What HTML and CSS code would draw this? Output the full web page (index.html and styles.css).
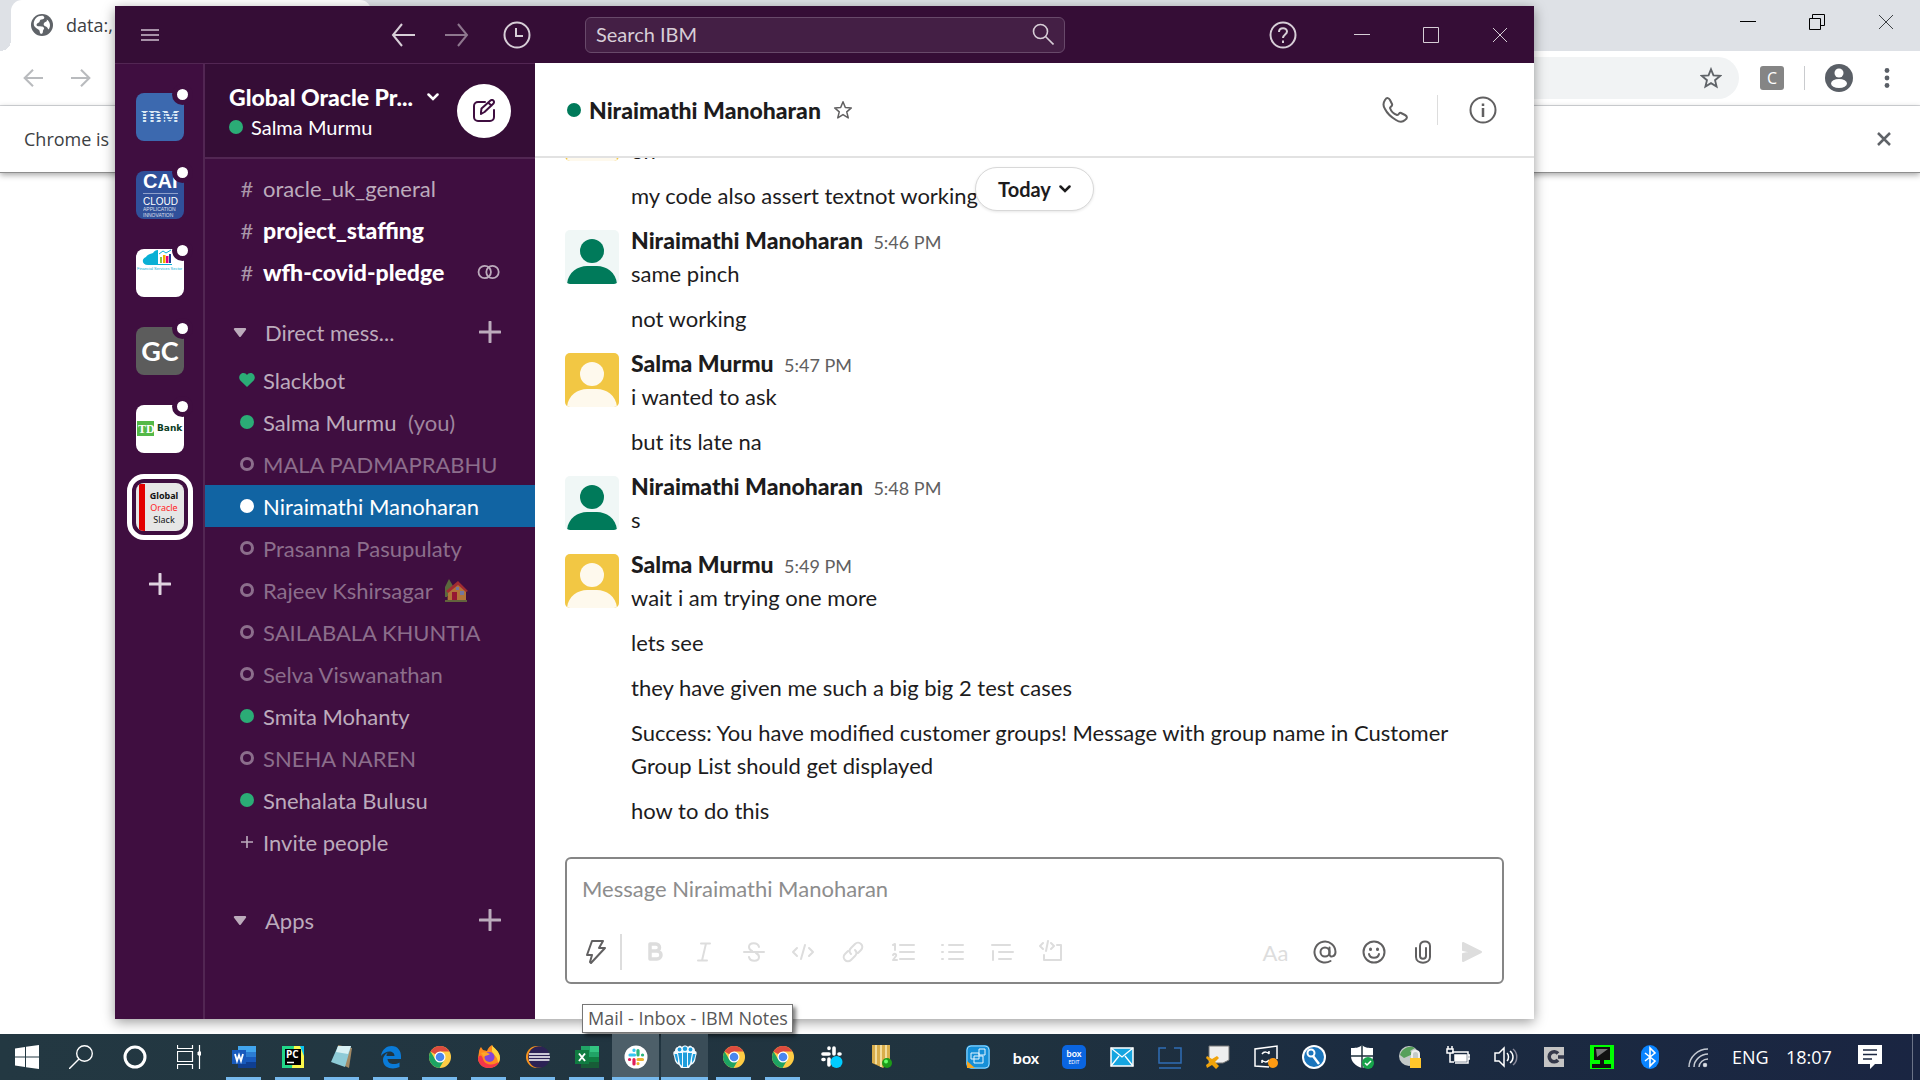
FILE: index.html
```html
<!DOCTYPE html>
<html lang="en">
<head>
<meta charset="utf-8">
<title>Niraimathi Manoharan | Slack</title>
<link rel="stylesheet" href="styles.css">
</head>
<body>
<svg class="defs" aria-hidden="true">
  <symbol id="person" viewBox="0 0 54 54"><ellipse cx="27" cy="21" rx="12" ry="12"/><path d="M2 54C3 42 13 36 22 36h10c9 0 19 6 20 18z"/></symbol>
  <symbol id="chrome" viewBox="0 0 24 24"><circle cx="12" cy="12" r="11" fill="#fc4"/><path d="M12 12 2.5 6.500A11 11 0 0 1 21.500 6.500H12z" fill="#dd4b3e"/><path d="M2.500 6.500A11 11 0 0 0 11.500 23l5-8.500L12 17l-5-3z" fill="#1da362"/><circle cx="12" cy="12" r="5.500" fill="#fff"/><circle cx="12" cy="12" r="4.300" fill="#4a86ee"/></symbol>
  <symbol id="plus" viewBox="0 0 22 22"><path d="M11 1v20M1 11h20" fill="none" stroke="currentColor" stroke-width="3" stroke-linecap="round"/></symbol>
  <symbol id="caret" viewBox="0 0 12 8"><path d="M1.500 1h9L6 7z" fill="currentColor" stroke="currentColor" stroke-width="2" stroke-linejoin="round"/></symbol>
  <symbol id="chev" viewBox="0 0 12 8"><path d="M1.500 1.500 6 6l4.500-4.500" fill="none" stroke="currentColor" stroke-width="2.500" stroke-linecap="round"/></symbol>
  <symbol id="arrow" viewBox="0 0 24 24"><path d="M11 1 2 12l9 11M2 12h22" fill="none" stroke="currentColor" stroke-width="2"/></symbol>
  <symbol id="close" viewBox="0 0 16 16"><path d="m1 1 14 14M15 1 1 15" fill="none" stroke="currentColor"/></symbol>
</svg>

<div class="screen">
  <section class="browser" aria-label="Browser">
    <div class="tabs">
      <div class="tab">
        <svg width="22" height="22" viewBox="0 0 24 24"><circle cx="12" cy="12" r="12" fill="#5f6368"/><path d="M13 2c3 2 1 4-1 4-3 0-2 2-3 3s-3 1-3 3 5 1 7 2c3 2 0 3 0 5 0 3-2 3-3 2-1-2 0-3-2-4-3-2-5-3-5-6 0-6 5-10 10-9zM17 6c4 2 5 8 2 11-1-2-1-3-4-4-2-1-1-3 0-4 2-1 3-1 2-3z" fill="#fff"/></svg>
        <span>data:,</span>
      </div>
      <div class="win-btns">
        <button aria-label="Minimize"><svg width="16" height="16" viewBox="0 0 16 16"><path d="M0 7.500h16" stroke="#000"/></svg></button>
        <button aria-label="Restore"><svg width="16" height="16" viewBox="0 0 16 16" fill="none" stroke="#000"><path d="M.5 4.500h11v11H.5zM3.500 4V.5h12v11H12"/></svg></button>
        <button aria-label="Close"><svg width="16" height="16"><use href="#close"/></svg></button>
      </div>
    </div>
    <div class="toolbar">
      <button aria-label="Back"><svg width="20" height="20" viewBox="0 0 24 24" fill="none" stroke="#b9bbbe" stroke-width="2.500"><path d="M12 2 2 12l10 10M2 12h22"/></svg></button>
      <button aria-label="Forward"><svg width="20" height="20" viewBox="0 0 24 24" fill="none" stroke="#b9bbbe" stroke-width="2.500"><path d="m12 2 10 10-10 10M22 12H0"/></svg></button>
      <div class="omnibox"><svg width="22" height="22" viewBox="0 0 24 24" fill="none" stroke="#5f6368" stroke-width="2"><path d="m12 2.500 2.700 6.700 7.200.5-5.500 4.700 1.700 7L12 17.600l-6.100 3.800 1.700-7L2.100 9.700l7.200-.5z"/></svg></div>
      <span class="ext">C</span>
      <span class="tool-sep"></span>
      <svg width="28" height="28" viewBox="0 0 28 28"><circle cx="14" cy="14" r="14" fill="#5a5f66"/><circle cx="14" cy="9" r="4.500" fill="#fff"/><ellipse cx="14" cy="19.500" rx="8" ry="4.500" fill="#fff"/></svg>
      <svg class="dots" width="6" height="20" viewBox="0 0 6 20" fill="#5a5f66"><circle cx="3" cy="2.500" r="2.400"/><circle cx="3" cy="10" r="2.400"/><circle cx="3" cy="17.500" r="2.400"/></svg>
    </div>
    <div class="infobar">
      <span>Chrome is</span>
      <button aria-label="Dismiss"><svg width="14" height="14" viewBox="0 0 14 14" stroke="#5f6368" stroke-width="2.500"><path d="m1 1 12 12M13 1 1 13"/></svg></button>
    </div>
  </section>

  <main class="slack">
    <header class="titlebar">
      <div class="tb-left">
        <button class="menu" aria-label="Menu"><svg width="18" height="12" viewBox="0 0 18 12" stroke="#cdbfce" stroke-width="1.500"><path d="M0 1h18M0 6h18M0 11h18"/></svg></button>
        <button aria-label="Back"><svg width="24" height="24"><use href="#arrow"/></svg></button>
        <button class="dim flip" aria-label="Forward"><svg width="24" height="24"><use href="#arrow"/></svg></button>
        <button aria-label="History"><svg width="28" height="28" viewBox="0 0 28 28" fill="none" stroke="currentColor" stroke-width="2"><circle cx="14" cy="14" r="12.500"/><path d="M13 7v8h7"/></svg></button>
      </div>
      <button class="search"><span>Search IBM</span><svg width="22" height="22" viewBox="0 0 22 22" fill="none" stroke="currentColor" stroke-width="1.600"><circle cx="8.500" cy="8.500" r="7"/><path d="m13.500 13.500 8 8"/></svg></button>
      <div class="tb-right">
        <button aria-label="Help"><svg width="28" height="28" viewBox="0 0 28 28" fill="none" stroke="currentColor" stroke-width="2"><circle cx="14" cy="14" r="12.500"/><path d="M10 11c0-5 8-5 8-.5 0 3-4 3-4 6.500"/><path d="M14 19.500v2.500"/></svg></button>
        <button aria-label="Minimize"><svg width="16" height="16" viewBox="0 0 16 16"><path d="M0 7.500h16" stroke="currentColor"/></svg></button>
        <button aria-label="Maximize"><svg width="16" height="16" viewBox="0 0 16 16"><path d="M.5.5h15v15H.5z" fill="none" stroke="currentColor"/></svg></button>
        <button aria-label="Close"><svg width="16" height="16"><use href="#close"/></svg></button>
      </div>
    </header>

    <nav class="rail" aria-label="Workspaces">
      <a href="#" class="ws ibm" aria-label="IBM"><svg width="48" height="48" viewBox="0 0 48 48"><text x="24" y="30" text-anchor="middle" class="t-ibm">IBM</text><path d="M5 17.500h38M5 20.500h38M5 23.500h38M5 26.500h38M5 29.500h38" stroke="#3c69af" stroke-width="1"/></svg><i></i></a>
      <a href="#" class="ws cai" aria-label="CAI"><svg width="48" height="48" viewBox="0 0 48 48" fill="#fff"><text x="7" y="17" class="t-cai">CAI</text><path d="M7 22.500h35" stroke="#8fa0cc"/><text x="7" y="34" class="t-cloud">CLOUD</text><text x="7" y="40" class="t-tiny">APPLICATION</text><text x="7" y="46" class="t-tiny">INNOVATION</text></svg><i></i></a>
      <a href="#" class="ws fss" aria-label="Financial Services Sector"><svg width="48" height="48" viewBox="0 0 48 48"><path d="M22 1v15H12c-6 0-7-6-2-8 2-3 5-3 7-4 1-2 3-3 5-3z" fill="#08b0d5"/><path d="M24 8h2v6h-2z" fill="#8bc53f"/><path d="M27 6h2.500v8H27z" fill="#f5a800"/><path d="M30 7h2.500v7H30z" fill="#e6007e"/><path d="M33 5h2v9h-2z" fill="#1d3f94"/><path d="m23 5 4-3 3 2 5-3M22 15.500h14" stroke="#08b0d5" fill="none"/><text x="1" y="21" class="t-fss">Financial Services Sector</text></svg><i></i></a>
      <a href="#" class="ws gc">GC<i></i></a>
      <a href="#" class="ws td" aria-label="TD Bank"><svg width="48" height="48" viewBox="0 0 48 48"><path d="M1 16h17v15H1z" fill="#54b948"/><text x="2" y="28" class="t-td" fill="#fff">TD</text><text x="21" y="26" class="t-bank" fill="#0b3d24">Bank</text></svg><i></i></a>
      <a href="#" class="ws gos" aria-label="Global Oracle Slack"><svg width="48" height="48" viewBox="0 0 48 48"><path d="M3 1h6v47H3z" fill="#e30000"/><g text-anchor="middle" class="t-gos"><text x="28" y="16" font-weight="700">Global</text><text x="28" y="28" fill="#f22">Oracle</text><text x="28" y="40">Slack</text></g></svg></a>
      <button class="add-ws" aria-label="Add workspace"><svg width="22" height="22"><use href="#plus"/></svg></button>
    </nav>

    <aside class="sidebar">
      <header class="team">
        <div class="team-text">
          <button class="team-name">Global Oracle Pr... <svg width="12" height="8"><use href="#chev"/></svg></button>
          <div class="me"><i class="dot on"></i>Salma Murmu</div>
        </div>
        <button class="compose" aria-label="New message"><svg width="24" height="24" viewBox="0 0 24 24" fill="none" stroke="#3f0e40" stroke-width="2" stroke-linejoin="round" stroke-linecap="round"><path d="M13 3H6a4 4 0 0 0-4 4v11a4 4 0 0 0 4 4h12a4 4 0 0 0 4-4v-7"/><path d="m9 13 .5-3.500L18.500 1.500c2-1.500 4.500.5 3 3L12.500 13 9 15zM16.500 4l3 2.500"/></svg></button>
      </header>
      <div class="list">
        <a href="#" class="row"><span class="ic">#</span>oracle_uk_general</a>
        <a href="#" class="row unread"><span class="ic">#</span>project_staffing</a>
        <a href="#" class="row unread"><span class="ic">#</span>wfh-covid-pledge<svg class="end" width="24" height="16" viewBox="0 0 24 16" fill="none" stroke="#bcabbc" stroke-width="1.800"><circle cx="15.500" cy="8" r="6.200"/><path d="M12 12.500A6.200 6.200 0 1 1 12 3.500a6.200 6.200 0 0 1 0 9z"/></svg></a>
        <div class="section"><svg class="car" width="14" height="9"><use href="#caret"/></svg><span>Direct mess...</span><button aria-label="New direct message"><svg width="22" height="22"><use href="#plus"/></svg></button></div>
        <a href="#" class="row"><span class="ic"><svg width="16" height="14" viewBox="0 0 16 14"><path d="M8 14 1.300 7.500C-1.500 4 1.500 0 4.500 0 6 0 7.300.8 8 2 8.700.8 10 0 11.500 0c3 0 6 4 3.200 7.500z" fill="#2bac76"/></svg></span>Slackbot</a>
        <a href="#" class="row"><span class="ic"><i class="dot on"></i></span>Salma Murmu <span class="you">(you)</span></a>
        <a href="#" class="row away"><span class="ic"><i class="dot"></i></span>MALA PADMAPRABHU</a>
        <a href="#" class="row current"><span class="ic"><i class="dot on"></i></span>Niraimathi Manoharan</a>
        <a href="#" class="row away"><span class="ic"><i class="dot"></i></span>Prasanna Pasupulaty</a>
        <a href="#" class="row away"><span class="ic"><i class="dot"></i></span>Rajeev Kshirsagar <svg class="house" width="24" height="24" viewBox="0 0 24 24"><path d="M5 1 1 9v10h8V8z" fill="#6fa53b"/><path d="M3 18h3v4H3z" fill="#7b5030"/><path d="M4 12 14 4l8 8v10H4z" fill="#ffb636"/><path d="M2 13 14 3l10 10-2 1-8-7-10 8z" fill="#e2402a"/><path d="M8 14h5v8H8z" fill="#d0202a"/><path d="M16 13h4v4h-4zM12 9h3v3h-3z" fill="#9bd"/><path d="M1 22h22v2H1z" fill="#7a9c3a"/></svg></a>
        <a href="#" class="row away"><span class="ic"><i class="dot"></i></span>SAILABALA KHUNTIA</a>
        <a href="#" class="row away"><span class="ic"><i class="dot"></i></span>Selva Viswanathan</a>
        <a href="#" class="row"><span class="ic"><i class="dot on"></i></span>Smita Mohanty</a>
        <a href="#" class="row away"><span class="ic"><i class="dot"></i></span>SNEHA NAREN</a>
        <a href="#" class="row"><span class="ic"><i class="dot on"></i></span>Snehalata Bulusu</a>
        <a href="#" class="row"><span class="ic"><svg width="12" height="12"><use href="#plus"/></svg></span>Invite people</a>
        <div class="section apps"><svg class="car" width="14" height="9"><use href="#caret"/></svg><span>Apps</span><button aria-label="Add apps"><svg width="22" height="22"><use href="#plus"/></svg></button></div>
      </div>
    </aside>

    <section class="chat">
      <header class="chat-head">
        <i class="dot"></i><h1>Niraimathi Manoharan</h1>
        <svg width="20" height="20" viewBox="0 0 24 24" fill="none" stroke="#616061" stroke-width="1.800" stroke-linejoin="round"><path d="m12 2 2.800 7 7.200.5-5.500 4.700 1.800 7.300L12 17.500l-6.300 4 1.800-7.300L2 9.500 9.200 9z"/></svg>
        <div class="head-actions">
          <button aria-label="Call"><svg width="26" height="26" viewBox="0 0 26 26" fill="none" stroke="#616061" stroke-width="2" stroke-linejoin="round"><path d="M3 3C5 0 7 1 8 3l2 4c1 2-2 3-2 4 1 3 4 6 7 7 2 0 2-3 4-2l4 2c2 1 3 3 0 5-3 3-6 2-9 0C9 20 5 16 3 12 1 9 1 6 3 3z"/></svg></button>
          <button aria-label="Details"><svg width="28" height="28" viewBox="0 0 28 28" fill="none" stroke="#616061" stroke-width="2"><circle cx="14" cy="14" r="12.500"/><path d="M14 12v9M14 7.500v2.500" stroke-width="2.500"/></svg></button>
        </div>
      </header>
      <div class="messages">
        <button class="today">Today <svg width="12" height="8"><use href="#chev"/></svg></button>
        <article class="msg oldest"><svg class="ava salma"><use href="#person"/></svg><p>on</p></article>
        <article class="msg next"><p>my code also assert textnot working</p></article>
        <article class="msg"><svg class="ava nirai"><use href="#person"/></svg><div><h2>Niraimathi Manoharan <time>5:46 PM</time></h2><p>same pinch</p></div></article>
        <article class="msg next"><p>not working</p></article>
        <article class="msg"><svg class="ava salma"><use href="#person"/></svg><div><h2>Salma Murmu <time>5:47 PM</time></h2><p>i wanted to ask</p></div></article>
        <article class="msg next"><p>but its late na</p></article>
        <article class="msg"><svg class="ava nirai"><use href="#person"/></svg><div><h2>Niraimathi Manoharan <time>5:48 PM</time></h2><p>s</p></div></article>
        <article class="msg"><svg class="ava salma"><use href="#person"/></svg><div><h2>Salma Murmu <time>5:49 PM</time></h2><p>wait i am trying one more</p></div></article>
        <article class="msg next"><p>lets see</p></article>
        <article class="msg next"><p>they have given me such a big big 2 test cases</p></article>
        <article class="msg next"><p>Success: You have modified customer groups! Message with group name in Customer Group List should get displayed</p></article>
        <article class="msg next"><p>how to do this</p></article>
      </div>
      <form class="composer">
        <textarea rows="1" aria-label="Message Niraimathi Manoharan" placeholder="Message Niraimathi Manoharan"></textarea>
        <div class="tools">
          <button type="button" class="bolt" aria-label="Shortcuts"><svg width="24" height="24" viewBox="0 0 24 24"><path d="M8 1h11l-4 7h6L7 23l-1-1 2-7H3z"/></svg></button>
          <div class="fmt">
            <button type="button" aria-label="Bold"><svg width="24" height="24" viewBox="0 0 24 24"><path d="M7 4h6a3.500 3.500 0 0 1 0 7H7zM7 11h7a4 4 0 0 1 0 8H7z" stroke-width="3.500"/></svg></button>
            <button type="button" aria-label="Italic"><svg width="24" height="24" viewBox="0 0 24 24"><path d="M9 3.500h9M6 20.500h9M14 3.500l-4 17"/></svg></button>
            <button type="button" aria-label="Strikethrough"><svg width="24" height="24" viewBox="0 0 24 24"><path d="M2 12h20M17 7c-1-5-10-5-10 0 0 2 1 3 3 4M7 17c1 5 10 5 10 0 0-2-1-3-3-4"/></svg></button>
            <button type="button" aria-label="Code"><svg width="24" height="24" viewBox="0 0 24 24"><path d="m6 8-4 4 4 4M18 8l4 4-4 4M14 5l-4 14"/></svg></button>
            <button type="button" aria-label="Link"><svg width="24" height="24" viewBox="0 0 24 24"><path d="M10 14c-2-2-2-4 0-6l4-4c4-4 10 2 6 6l-3 3M14 10c2 2 2 4 0 6l-4 4c-4 4-10-2-6-6l3-3"/></svg></button>
            <button type="button" aria-label="Ordered list"><svg width="24" height="24" viewBox="0 0 24 24"><path d="M9 5h14M9 12h14M9 19h14M2 5l2-1v6M2 15c1-2 4-1 3 1l-3 4h4"/></svg></button>
            <button type="button" aria-label="Bulleted list"><svg width="24" height="24" viewBox="0 0 24 24"><path d="M9 5h14M9 12h14M9 19h14M2 5h1M2 12h1M2 19h1"/></svg></button>
            <button type="button" aria-label="Quote"><svg width="24" height="24" viewBox="0 0 24 24"><path d="M2 5h18M9 12h14M9 19h12M3 11v9"/></svg></button>
            <button type="button" aria-label="Code block"><svg width="24" height="24" viewBox="0 0 24 24"><path d="M4 3 1 6l3 3M12 3l3 3-3 3M9 1 7 11M18 5h4v15H5v-5"/></svg></button>
          </div>
          <div class="send">
            <button type="button" class="off aa">Aa</button>
            <button type="button" aria-label="Mention"><svg width="24" height="24" viewBox="0 0 24 24"><circle cx="12" cy="12" r="4.500"/><path d="M16.500 7.500V14c0 4 6 3 6-2a10.500 10.500 0 1 0-5 9"/></svg></button>
            <button type="button" aria-label="Emoji"><svg width="24" height="24" viewBox="0 0 24 24"><circle cx="12" cy="12" r="10.500"/><path d="M8.500 9v.5M15.500 9v.5" stroke-width="3"/><path d="M7 14c1 5 9 5 10 0"/></svg></button>
            <button type="button" aria-label="Attach"><svg width="24" height="24" viewBox="0 0 24 24"><path d="M5 8v9c0 7.500 14 7.500 14 0V6c0-6-10-6-10 0v10c0 3.500 6 3.500 6 0V8"/></svg></button>
            <button type="submit" class="off" aria-label="Send"><svg width="24" height="24" viewBox="0 0 24 24"><path class="plane" d="M3 3v7l9 2-9 2v7l18-9z"/></svg></button>
          </div>
        </div>
      </form>
    </section>
  </main>

  <footer class="taskbar">
    <div class="tooltip">Mail - Inbox - IBM Notes</div>
    <div class="sys">
      <button aria-label="Start"><svg width="24" height="24" viewBox="0 0 24 24" fill="#fff"><path d="M0 3.500 10 2v9.500H0zM11 1.800 24 0v11.500H11zM0 12.500h10V22L0 20.500zM11 12.500h13V24l-13-1.800z"/></svg></button>
      <button aria-label="Search"><svg width="24" height="24" viewBox="0 0 24 24" fill="none" stroke="#fff" stroke-width="1.400"><circle cx="15.500" cy="8.500" r="7.800"/><path d="M10 14 0 24"/></svg></button>
      <button aria-label="Cortana"><svg width="24" height="24" viewBox="0 0 24 24" fill="none" stroke="#fff" stroke-width="3"><circle cx="12" cy="12" r="10"/></svg></button>
      <button aria-label="Task view"><svg width="24" height="24" viewBox="0 0 24 24" fill="none" stroke="#fff"><path d="M.5 0v3.500h15V0M.5 6.500h15v10H.5zM.5 24v-4.500h15V24M22.500 0v24" stroke-width="1.200"/><path d="M21 7h3v3h-3z" fill="#fff"/></svg></button>
    </div>
    <div class="apps-bar">
      <button class="run" aria-label="Word"><svg width="24" height="24" viewBox="0 0 24 24"><path d="M6 1h18v6H6z" fill="#41a5ee"/><path d="M6 7h18v5H6z" fill="#2b7cd3"/><path d="M6 12h18v5H6z" fill="#185abd"/><path d="M6 17h18v6H6z" fill="#103f91"/><path d="M0 5h14v14H0z" fill="#185abd"/><path d="m3 9 2 7 2-6 2 6 2-7" fill="none" stroke="#fff" stroke-width="1.800"/></svg></button>
      <button class="run" aria-label="PyCharm"><svg width="24" height="24" viewBox="0 0 24 24"><path d="M1 1h22v22H1z" fill="#21d789"/><path d="M13 1h10v22H11z" fill="#fcf84a"/><path d="m19 1 4 10V1z" fill="#07c3f2"/><path d="M4 4h16v16H4z" fill="#000"/><text x="5" y="13" class="t-pc">PC</text><path d="M6 17.500h7" stroke="#fff" stroke-width="1.500"/></svg></button>
      <button class="run" aria-label="Notepad"><svg width="24" height="24" viewBox="0 0 24 24"><path d="m8 0 14 3-3 20-4-2z" fill="#a38a65"/><path d="M8 1h13l-6 21-14-5z" fill="#8ecbd7"/><path d="M8 1h13l-3 8-12-2z" fill="#d8f1f4"/></svg></button>
      <button class="run" aria-label="Edge"><svg width="24" height="24" viewBox="0 0 24 24"><path d="M2 11C3 4 8 1 12.500 1 19 1 22 6 22 11v3H8.500c.5 6 8 6 12 3.500V22C14 25 4 23.500 4 15c0-4 3-6.500 5-7.500-1 1-1.500 2-1.500 3.500h8c0-6-9-6-13.500 0z" fill="#0a7bd8"/></svg></button>
      <button class="run" aria-label="Chrome"><svg width="24" height="24"><use href="#chrome"/></svg></button>
      <button class="run" aria-label="Firefox"><svg width="24" height="24" viewBox="0 0 24 24"><path d="M2 7c0-2 1-4 2-5l2 3 4 1c1-3 3-5 5-6 1 3 8 6 8 13 0 6-5 10-11 10S1 19 1 13z" fill="#ff8a1f"/><path d="M1 13c0 5 4 10 11 10 5 0 9-3 10.500-7C18 21 8 21 6 14 5 10 3 9 1 13z" fill="#f4354a"/><path d="M15 0c1 3 8 6 8 13 0 2-1 4-2 5 0-7-5-8-6-12z" fill="#ffd43c"/><circle cx="12.500" cy="12" r="5" fill="#8345d8"/><path d="M4 8c4-2 7 0 9 1-2 2-5 1-6 3z" fill="#ffa628"/></svg></button>
      <button class="run" aria-label="Eclipse"><svg width="24" height="24" viewBox="0 0 24 24"><circle cx="11" cy="12" r="11" fill="#f7941e"/><circle cx="13" cy="12" r="10.800" fill="#2c2255"/><path d="M3 9h20.500M3 12h21M3 15h20.500" stroke="#fff" stroke-width="1.300"/></svg></button>
      <button class="run" aria-label="Excel"><svg width="24" height="24" viewBox="0 0 24 24"><path d="M6 1h9v11H6z" fill="#21a366"/><path d="M15 1h9v6h-9z" fill="#33c481"/><path d="M15 7h9v5h-9z" fill="#21a366"/><path d="M6 12h18v5H6z" fill="#107c41"/><path d="M6 17h18v6H6z" fill="#185c37"/><path d="M0 5h14v14H0z" fill="#107c41"/><path d="m4 8.500 6 7.500M10 8.500 4 16" stroke="#fff" stroke-width="2"/></svg></button>
      <button class="run hot" aria-label="Slack"><svg width="24" height="24" viewBox="0 0 24 24"><circle cx="12" cy="12" r="11.500" fill="#fff"/><g fill="none" stroke-width="3.200" stroke-linecap="round"><path d="M6 10h4.500M10 5v.5" stroke="#36c5f0"/><path d="M14 5.500V10M18.500 10h.1" stroke="#2eb67d"/><path d="M14 14.500h4.500M14 18.500v.1" stroke="#ecb22e"/><path d="M10 14.500V19M5.500 14.500h.1" stroke="#e01e5a"/></g></svg></button>
      <button class="run hot warm" aria-label="IBM Notes"><svg width="24" height="24" viewBox="0 0 24 24"><path d="M5 2c1-2 3-1 4 0 1-2 5-2 6 0 1-1 3-2 4 0 2 0 3 2 3 4 2 0 2 3 1 5l-1 5c-1 2-2 3-4 4l-2 3H8l-2-3c-2-1-3-2-4-4l-1-5C0 9 0 6 2 6c0-2 1-4 3-4z" fill="#f2fafe"/><g fill="#1e9ddb"><circle cx="12" cy="3.800" r="2.200"/><circle cx="6.500" cy="4.500" r="1.900"/><circle cx="17.500" cy="4.500" r="1.900"/><path d="M10 7.500h4V22h-4zM5 8h4v13l-2-2-1-6zM15 8h4l-1 5-1 6-2 2zM1.500 9H4l1 5v4l-2-3zM20 9h2.500L21 15l-2 3v-4z"/></g></svg></button>
      <button class="run" aria-label="Chrome"><svg width="24" height="24"><use href="#chrome"/></svg></button>
      <button class="run" aria-label="Chrome"><svg width="24" height="24"><use href="#chrome"/></svg></button>
      <button aria-label="Slack"><svg width="24" height="24" viewBox="0 0 24 24"><path d="M3 9h6M9 3v.5M14 3v6M19 9h1M9 14v6M3 14.500h1" stroke="#fff" stroke-width="3.600" stroke-linecap="round"/><circle cx="16.500" cy="17" r="6" fill="#0cf"/></svg></button>
      <button aria-label="Notes"><svg width="24" height="24" viewBox="0 0 24 24"><path d="M3 0h18v16l-7 7-11-5z" fill="#d9ae4c"/><path d="M7 0v19M12 0v22M17 0v18" stroke="#f3dc9c" stroke-width="2"/><circle cx="18" cy="18" r="5" fill="#1d9c19"/><circle cx="17" cy="16.500" r="2" fill="#6f6"/></svg></button>
    </div>
    <div class="tray">
      <span><svg viewBox="0 0 24 24"><rect width="24" height="24" rx="5" fill="#1690d8"/><rect x="1" y="1" width="22" height="22" rx="4" fill="none" stroke="#9fd6f5"/><path d="M5 8h8v6H5zM8 11h9v7H8zM13 4h6v6h-6z" fill="none" stroke="#e8f6ff"/><path d="M1 16v7h8z" fill="#f5a623"/></svg></span>
      <span class="box">box</span>
      <span><svg viewBox="0 0 24 24"><rect width="24" height="24" rx="5" fill="#0a65e0"/><text x="12" y="12" text-anchor="middle" class="t-box">box</text><text x="12" y="19" text-anchor="middle" class="t-edit">EDIT</text></svg></span>
      <span><svg viewBox="0 0 24 24"><path d="M1 3h22v18H1z" fill="#15a5e0" stroke="#fff" stroke-width="1.500"/><path d="m1 3 11 9 11-9M1 21l8-10M23 21l-8-10" fill="none" stroke="#fff" stroke-width="1.300"/></svg></span>
      <span><svg viewBox="0 0 24 24" fill="none" stroke="#2f6db5" stroke-width="1.500"><path d="M8 3H1v15h22V3h-7M1 23h22"/></svg></span>
      <span><svg viewBox="0 0 24 24"><path d="M3 1h20v14l-6 3H3z" fill="#eee" stroke="#777"/><path d="m1 11 5 3 5-3 2 2-4 4 4 4-3 3-4-4-5 3-1-3 4-3-4-4z" fill="#f0a30a"/></svg></span>
      <span><svg viewBox="0 0 24 24" fill="none" stroke="#fff" stroke-width="1.500"><path d="M15 22 1 21V4l22-3v13M8 9c2-3 6-2 7 0V6M15 15c-2 3-6 2-7 0v3"/><circle cx="19" cy="18" r="5" fill="#ff9b13" stroke="none"/></svg></span>
      <span><svg viewBox="0 0 24 24"><circle cx="12" cy="12" r="12" fill="#fff"/><circle cx="12" cy="12" r="10" fill="#1b75bc"/><circle cx="9" cy="8" r="3.500" fill="none" stroke="#fff" stroke-width="2"/><path d="m11 11 6 8" stroke="#fff" stroke-width="2.500"/></svg></span>
      <span><svg viewBox="0 0 24 24"><path d="M12 0c3 3 7 3 11 3v8c0 6-5 10-11 12C6 21 1 17 1 11V3c4 0 8 0 11-3z" fill="#fff"/><path d="M12 0v23M1 11h22" stroke="#1f323e" stroke-width="1.500"/><circle cx="18" cy="18" r="6" fill="#16a34a"/><path d="m15 18 2 2 4-4" fill="none" stroke="#fff" stroke-width="1.500"/></svg></span>
      <span><svg viewBox="0 0 24 24"><circle cx="11" cy="11" r="10" fill="#c4cac8"/><path d="M2 10C4 3 12 0 17 3l-5 3 3 3-9 4z" fill="#57a05b"/><path d="M12 13h11v10H12z" fill="#ffc62b"/><path d="M14 13V9c0-4 7-4 7 0v4" fill="none" stroke="#eee" stroke-width="2"/></svg></span>
      <span><svg viewBox="0 0 24 24" fill="none" stroke="#fff" stroke-width="1.500"><path d="M6 7h16v11H9"/><path d="M9 10h11v6H9z" fill="#fff"/><path d="M22 10h2v4h-2M1 4h6v4H1zM2 1v3M6 1v3M4 8v9h4"/></svg></span>
      <span><svg viewBox="0 0 24 24" fill="none" stroke="#fff" stroke-width="1.500"><path d="M1 8h4l5-5v18l-5-5H1zM13 8c2 2 2 6 0 8M16 6c4 3 4 9 0 12"/><path d="M19 4c5 4 5 12 0 16" stroke="#889"/></svg></span>
      <span><svg viewBox="0 0 24 24"><path d="M2 2h20v20H2z" fill="#c4c4c4"/><path d="M16 8.500A5 5 0 1 0 16 15M16 12h6" fill="none" stroke="#35394b" stroke-width="3.500"/></svg></span>
      <span><svg viewBox="0 0 24 24"><path d="M0 0h24v24H0z" fill="#0f0"/><path d="M4 2h16v13H4zM10 15h4v4h-4zM2 19h19v4H2z" fill="#111"/><path d="M6 4h12L7 12z" fill="#777"/></svg></span>
      <span><svg viewBox="0 0 24 24"><rect x="3" width="18" height="24" rx="9" fill="#0a84ff"/><path d="m7 8 10 8-5 5V3l5 5-10 8" fill="none" stroke="#fff" stroke-width="1.600"/></svg></span>
      <span><svg viewBox="0 0 24 24" fill="none" stroke="#c4c9d2" stroke-width="1.500"><path d="M3 22C3 12 12 4 22 4M8 22c0-7 7-13 14-13M13 22c0-4 4-8 9-8"/><circle cx="19" cy="20" r="1.500" fill="#fff"/></svg></span>
    </div>
    <span class="lang">ENG</span>
    <time class="clock">18:07</time>
    <button class="notif" aria-label="Notifications"><svg width="24" height="24" viewBox="0 0 24 24"><path d="M0 0h24v19h-7l-5 5v-5H0z" fill="#fff"/><path d="M5 5h14M5 9.500h14M5 14h9" stroke="#1b2740" stroke-width="1.500"/></svg></button>
    <span class="peek"></span>
  </footer>
</div>
</body>
</html>
```
FILE: styles.css
```css
* { box-sizing: border-box; }
body { margin: 0; font-family: Lato, "Liberation Sans", sans-serif; }
button { border: 0; padding: 0; background: none; font: inherit; color: inherit; display: flex; align-items: center; justify-content: center; }
a { color: inherit; text-decoration: none; }
h1, h2, p { margin: 0; }
svg { display: block; flex: none; }
.defs { position: absolute; width: 0; height: 0; }

.screen { position: relative; min-height: 100vh; display: flex; flex-direction: column; background: #fff; overflow: hidden; }

/* Browser behind the chat window */
.browser { flex: 1; font-family: "Open Sans", "Noto Sans", sans-serif; font-size: 18px; color: #3c4043; }
.tabs { display: flex; justify-content: space-between; height: 51px; padding-left: 11px; background: #dee1e6; }
.tab { position: relative; display: flex; align-items: center; gap: 13px; width: 360px; padding: 0 0 2px 20px; border-radius: 11px 11px 0 0; background: #fff; }
.tab::before { content: ""; position: absolute; left: -11px; bottom: 0; width: 11px; height: 11px; background: radial-gradient(circle at 0 0, #dee1e6 11px, #fff 11px); }
.win-btns { display: flex; height: 43px; }
.win-btns button { width: 69px; }
.toolbar { display: flex; align-items: center; height: 55px; padding: 0 30px 0 23px; border-bottom: 1px solid #d8dadd; }
.toolbar button { margin-right: 28px; }
.omnibox { display: flex; align-items: center; justify-content: flex-end; flex: 1; height: 42px; margin-right: 21px; padding-right: 17px; border-radius: 21px; background: #f1f3f4; }
.ext { width: 24px; height: 24px; border-radius: 3px; background: #858585; color: #fff; font-size: 16px; line-height: 24px; text-align: center; }
.tool-sep { width: 1px; height: 24px; margin: 0 20px; background: #c9cbce; }
.dots { margin-left: 31px; }
.infobar { display: flex; align-items: center; justify-content: space-between; height: 67px; padding: 0 29px 0 24px; border-bottom: 1px solid #8e8e8e; box-shadow: 0 2px 6px rgba(0,0,0,.35); }

/* Chat window */
.slack { position: absolute; left: 115px; right: 386px; top: 6px; bottom: 61px; display: grid; grid-template: 57px minmax(0, 1fr) / 90px 330px minmax(0, 1fr); background: #fff; color: #1d1c1d; box-shadow: 0 3px 12px rgba(0,0,0,.4); }
.titlebar { grid-column: 1 / -1; display: grid; grid-template-columns: 470px minmax(0, 480px) minmax(0, 1fr); align-items: center; background: #350d36; color: #d7ced7; }
.tb-left, .tb-right { display: flex; align-items: center; }
.tb-left { padding-left: 26px; }
.tb-left button { margin-right: 30px; }
.tb-left .menu { margin-right: auto; }
.tb-left button:last-child { margin: 0 54px 0 4px; }
.dim { opacity: .55; }
.flip svg { transform: rotate(180deg); }
.search { justify-content: space-between; height: 36px; padding: 0 10px 2px; border: 1px solid #68496a; border-radius: 6px; background: #441f45; font-size: 20px; }
.tb-right { justify-content: flex-end; gap: 53px; padding-right: 26px; }
.tb-right button:first-child { margin-right: 4px; }

.rail { display: flex; flex-direction: column; align-items: center; gap: 30px; padding: 29px 0 0 2px; background: #3f0e40; border-right: 2px solid #522653; border-top: 1px solid #522653; }
.ws { position: relative; width: 48px; height: 48px; border-radius: 8px; background: #fff; }
.ws svg { border-radius: 8px; }
.ws i { position: absolute; right: -9px; top: -9px; width: 21px; height: 21px; border: 5px solid #3f0e40; border-radius: 50%; background: #fff; }
.ibm { background: #3c69af; }
.cai { background: #30509a; }
.gc { background: #5c5c5c; color: #fff; font-size: 27px; font-weight: 700; line-height: 48px; text-align: center; }
.gos { background: #e6e6e6; outline: 5px solid #fff; outline-offset: 4px; }
.add-ws { margin-top: 12px; color: #dfd3df; }
.t-ibm { font: 700 16px "DejaVu Serif", serif; fill: #dce9f5; }
.t-cai { font: 700 20px "Liberation Sans", sans-serif; }
.t-cloud { font: 10px "Liberation Sans", sans-serif; }
.t-tiny { font: 5px "Liberation Sans", sans-serif; opacity: .8; }
.t-fss { font: 4px "Liberation Sans", sans-serif; fill: #08b0d5; }
.t-td { font: 700 12px "Liberation Serif", serif; }
.t-bank { font: 700 9px "DejaVu Sans", sans-serif; }
.t-gos { font-family: "Noto Sans", sans-serif; font-size: 9px; fill: #111; }

.sidebar { display: flex; flex-direction: column; min-height: 0; background: #3f0e40; color: #bcabbc; }
.team { display: flex; align-items: center; justify-content: space-between; height: 96px; padding: 0 24px; background: #350d36; border-top: 1px solid #522653; border-bottom: 2px solid #522653; color: #fff; }
.team-name { gap: 14px; font-size: 23px; font-weight: 900; line-height: 32px; white-space: nowrap; }
.me { display: flex; align-items: center; gap: 8px; font-size: 20px; line-height: 28px; }
.compose { width: 54px; height: 54px; border-radius: 50%; background: #fff; }
.dot { display: block; width: 14px; height: 14px; border: 3px solid currentColor; border-radius: 50%; }
.dot.on { border: 0; background: #2bac76; }
.list { flex: 1; overflow: hidden; padding-top: 8px; }
.row { display: flex; align-items: center; height: 42px; padding: 0 34px; font-size: 22px; white-space: pre; }
.row .ic { display: flex; align-items: center; justify-content: center; width: 16px; margin-right: 8px; color: #a995a9; }
.row .ic svg { color: #bcabbc; }
.unread { color: #fff; font-size: 23px; font-weight: 900; }
.unread .ic { font-size: 22px; font-weight: 400; }
.end { margin-left: auto; }
.away { color: #8c6e8c; }
.away .ic { color: inherit; }
.you { color: #9f869f; margin-left: 6px; }
.current { background: #1164a3; color: #fff; }
.current .dot.on { background: #fff; }
.house { margin-left: 6px; opacity: .6; }
.section { display: flex; align-items: center; height: 42px; margin: 18px 0 6px; padding: 0 34px 0 28px; font-size: 22px; }
.section button { margin-left: auto; }
.section svg { color: #bcabbc; }
.car { margin-right: 18px; }
.apps { margin-top: 36px; }

.chat { display: flex; flex-direction: column; min-height: 0; }
.chat-head { display: flex; align-items: center; height: 95px; padding: 0 37px 0 32px; border-bottom: 2px solid #e2e2e2; }
.chat-head .dot { border: 0; background: #007a5a; }
.chat-head h1 { margin: 0 12px 0 8px; font-size: 23px; font-weight: 900; }
.head-actions { display: flex; align-items: center; margin-left: auto; }
.head-actions button { height: 30px; padding-left: 31px; }
.head-actions button:first-child { padding: 0 29px 0 0; border-right: 1px solid #ddd; }
.messages { position: relative; flex: 1; min-height: 0; display: flex; flex-direction: column; justify-content: flex-end; overflow: hidden; padding-bottom: 24px; }
.today { position: absolute; top: 9px; left: 440px; height: 44px; width: 119px; gap: 8px; border: 1px solid #d8d8d8; border-radius: 22px; background: #fff; box-shadow: 0 1px 3px rgba(0,0,0,.1); font-size: 20px; font-weight: 700; }
.msg { display: flex; flex: none; gap: 12px; padding: 6px 30px; font-size: 22px; line-height: 33px; }
.next { padding-left: 96px; }
.oldest p { padding-top: 33px; }
.msg h2 { height: 33px; font-size: 23px; font-weight: 900; line-height: 33px; }
.msg time { margin-left: 5px; font-size: 18px; font-weight: 400; line-height: 1; color: #616061; }
.ava { width: 54px; height: 54px; margin-top: 6px; border-radius: 5px; }
.salma { background: #f2c744; fill: #fef9ed; }
.nirai { background: #f0f7f6; fill: #007a5a; }
.composer { display: flex; flex-direction: column; margin: 0 30px 35px; height: 127px; border: 2px solid #868686; border-radius: 6px; }
.composer textarea { flex: 1; width: 100%; padding: 13px 15px 0; border: 0; background: none; outline: 0; resize: none; overflow: hidden; font: 22px/33px Lato, sans-serif; }
.composer textarea::placeholder { color: #8d8d8d; }
.tools { display: flex; align-items: center; height: 60px; padding-right: 6px; }
.tools svg { fill: none; stroke: currentColor; stroke-width: 2; stroke-linejoin: round; stroke-linecap: round; }
.bolt { height: 36px; padding: 0 12px 0 17px; border-right: 2px solid #ddd; color: #616061; }
.fmt { display: grid; grid-template-columns: repeat(9, 1fr); width: 446px; margin-left: 8px; color: #ddd; }
.send { display: grid; grid-template-columns: repeat(5, 49px); margin-left: auto; color: #616061; }
.send .off { color: #ddd; }
.aa { font-size: 22px; }
.plane { fill: currentColor; }

/* Taskbar */
.taskbar { position: relative; display: flex; align-items: center; height: 46px; background: linear-gradient(90deg, #233842, #20333f 50%, #1b2b40 72%, #1a2542); color: #fff; font-family: "Open Sans", "Noto Sans", sans-serif; font-size: 18px; }
.tooltip { position: absolute; left: 582px; bottom: 47px; height: 29px; padding: 0 4px 0 5px; border: 1px solid #767676; background: #fff; box-shadow: 3px 3px 4px rgba(0,0,0,.5); color: #575757; line-height: 27px; white-space: nowrap; }
.sys, .apps-bar, .tray { display: flex; height: 100%; }
.sys button { width: 54px; }
.apps-bar { gap: 2px; margin-left: 4px; }
.apps-bar button { position: relative; width: 47px; }
.run::after { content: ""; position: absolute; left: 6px; right: 6px; bottom: 0; height: 3px; background: #76b9ed; }
.hot { background: #4d5f69; }
.warm { background: #3a4d58; }
.hot::after { left: 0; right: 0; }
.tray { margin-left: auto; }
.tray span { display: flex; align-items: center; justify-content: center; width: 48px; }
.tray svg { width: 24px; height: 24px; }
.tray .box { font: 700 16px Lato, sans-serif; }
.t-pc { font: 700 10px "Open Sans", sans-serif; fill: #fff; }
.t-box { font: 700 9px Lato, sans-serif; fill: #fff; }
.t-edit { font: 5px Lato, sans-serif; fill: #fff; }
.lang { width: 34px; margin: 0 20px 0 10px; }
.clock { width: 44px; }
.notif { margin: 0 30px 0 28px; }
.peek { width: 1px; height: 100%; margin-right: 7px; background: #6b7387; }
```
